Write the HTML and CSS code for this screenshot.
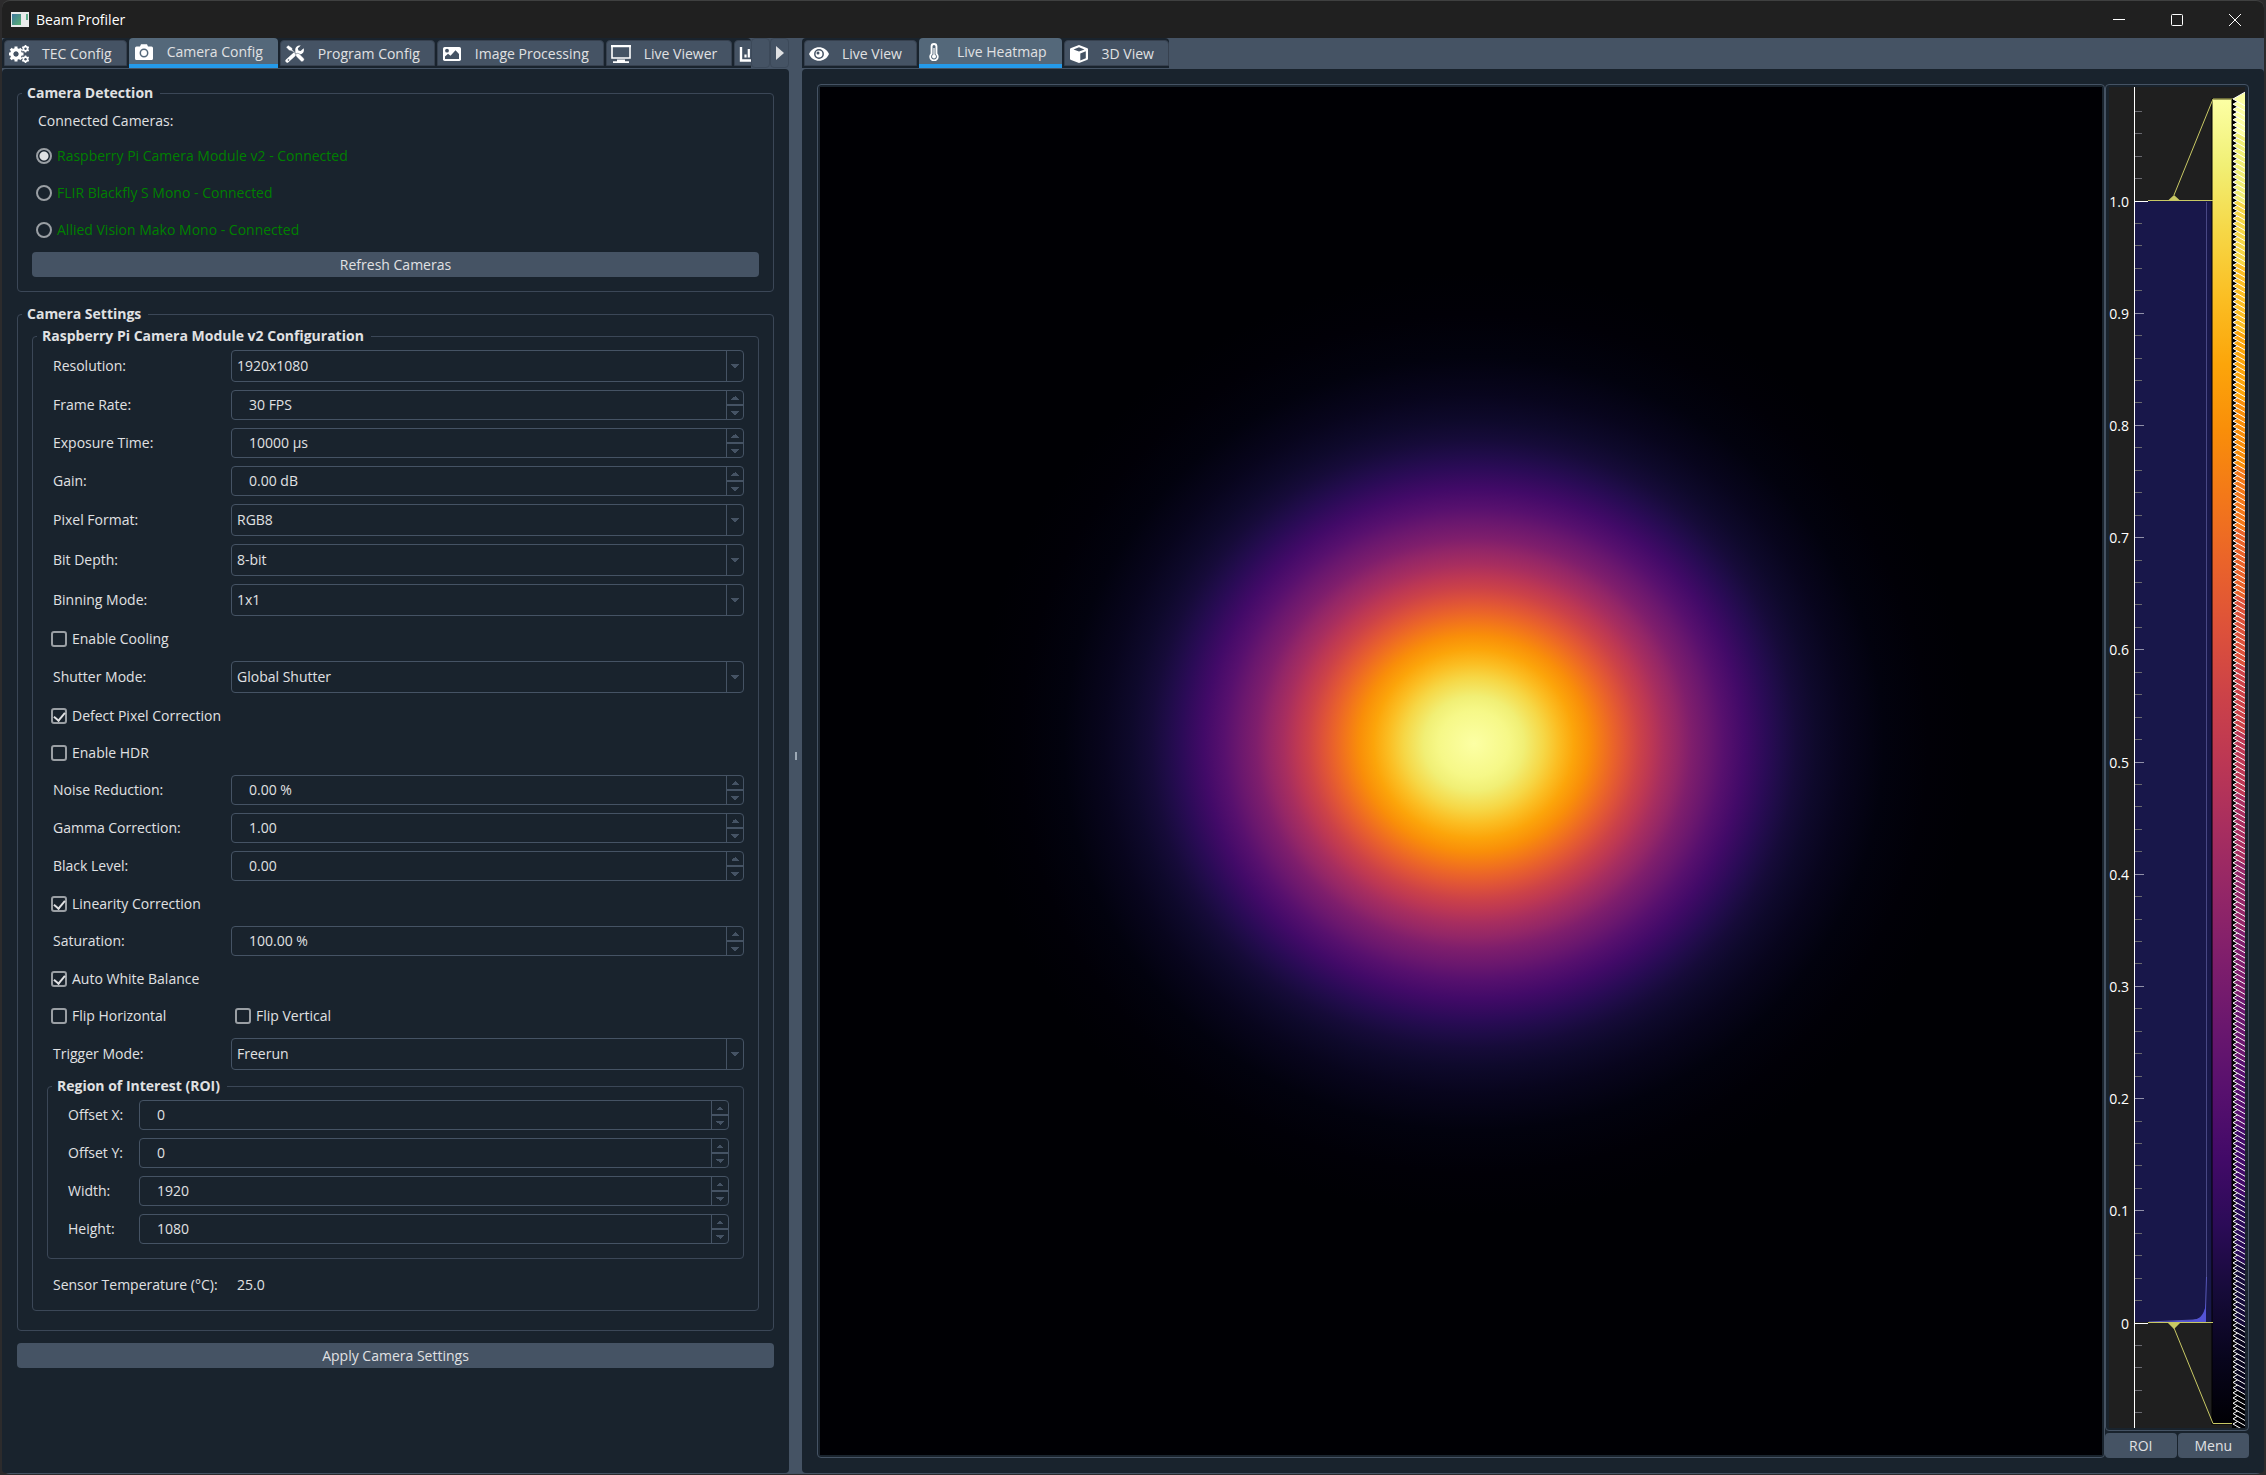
FILE: index.html
```html
<!DOCTYPE html>
<html lang="en">
<head>
    <meta charset="UTF-8">
    <meta name="viewport" content="width=device-width, initial-scale=1.0">
    <title>Beam Profiler</title>
    <link rel="stylesheet" href="styles.css">
</head>
<body>

<div class="window">
    <header class="titlebar">
        <svg class="app-icon" viewBox="0 0 18 15">
            <defs>
                <linearGradient id="appFill" x1="0" y1="0" x2="1" y2="1">
                    <stop offset="0" stop-color="#3f78a0"/>
                    <stop offset="1" stop-color="#58b070"/>
                </linearGradient>
            </defs>
            <rect width="18" height="15" fill="#e9ebec"/>
            <rect x="1" y="2" width="9" height="11" fill="url(#appFill)"/>
            <rect x="15" y="2" width="2" height="6" fill="#5fae8c"/>
        </svg>
        <span class="app-name">Beam Profiler</span>
        <div class="window-buttons">
            <button aria-label="Minimize"><svg viewBox="0 0 14 14"><path d="M1 6.500h12"/></svg></button>
            <button aria-label="Maximize"><svg viewBox="0 0 14 14"><rect x="1.500" y="1.500" width="11" height="11" rx="1"/></svg></button>
            <button aria-label="Close"><svg viewBox="0 0 14 14"><path d="M1 1l12 12M13 1L1 13"/></svg></button>
        </div>
    </header>

    <main class="split">
        <section class="pane pane-config">
            <div class="tabbar">
                <div class="tabs" role="tablist">
                    <button class="tab" role="tab">
                        <svg viewBox="0 0 20 18"><circle cx="7" cy="9" r="4.200" fill="none" stroke="#fff" stroke-width="3.400"/><path d="M7 1.500v3M7 13.500v3M-.5 9h3M11.500 9h3M1.700 3.700l2 2M10.300 12.300l2 2M12.300 3.700l-2 2M3.700 12.300l-2 2" stroke="#fff" stroke-width="3"/><circle cx="16.500" cy="3.800" r="2" fill="none" stroke="#fff" stroke-width="2"/><path d="M16.500 0v7.600M13.200 1.900l6.600 3.800M13.200 5.700l6.600-3.800" stroke="#fff" stroke-width="1.600"/><circle cx="16.500" cy="14.200" r="2" fill="none" stroke="#fff" stroke-width="2"/><path d="M16.500 10.400v7.600M13.200 12.300l6.600 3.800M13.200 16.100l6.600-3.800" stroke="#fff" stroke-width="1.600"/><circle cx="7" cy="9" r="2.400" fill="#455364"/><circle cx="16.500" cy="3.800" r="1.200" fill="#455364"/><circle cx="16.500" cy="14.200" r="1.200" fill="#455364"/></svg>
                        TEC Config
                    </button>
                    <button class="tab active" role="tab" aria-selected="true">
                        <svg viewBox="0 0 20 18"><path d="M2.500 3.500H6L7 1.200h6l1 2.300h3.500A1.500 1.500 0 0 1 19 5v10.500a1.500 1.500 0 0 1-1.500 1.500h-15A1.500 1.500 0 0 1 1 15.500V5a1.500 1.500 0 0 1 1.500-1.500z" fill="#fff"/><circle cx="10" cy="10" r="3.700" fill="none" stroke="#54687a" stroke-width="1.500"/></svg>
                        Camera Config
                    </button>
                    <button class="tab" role="tab">
                        <svg viewBox="0 0 20 18"><path d="M2.200 15.800l8.300-7.500" stroke="#fff" stroke-width="3.600" stroke-linecap="round"/><path d="M18.600 3.300l-3 2.700-2.200-.5-.6-2.200 3-2.700c-2.600-.8-5.600 1-5.600 4.200 0 3.400 3.400 5.400 6.300 4.300 2-.8 3-3.400 2.100-5.800z" fill="#fff"/><path d="M1 2.200L3.300.2l4 2.900.2 2 3.800 3.500c1.400-.5 2.500-.2 3.500.7l4.200 4.100c1.300 1.300-1.400 4.300-2.900 3l-4.400-4.300c-1-1-1.300-2.300-.8-3.400L6.500 5.900l-2.300-.3z" fill="#fff" stroke="#455364" stroke-width=".5"/><circle cx="3.500" cy="15" r=".8" fill="#455364"/></svg>
                        Program Config
                    </button>
                    <button class="tab" role="tab">
                        <svg viewBox="0 0 20 18"><rect x="1" y="2" width="18" height="14" rx="1.700" fill="#fff"/><circle cx="5" cy="5.700" r="1.900" fill="#455364"/><path d="M3 14v-2.500l3-2.700 2.500 2 5-5.500L17 9v5z" fill="#455364"/></svg>
                        Image Processing
                    </button>
                    <button class="tab" role="tab">
                        <svg viewBox="0 0 20 18"><path d="M1 1h18v12H1z" fill="none" stroke="#fff" stroke-width="1.600"/><path d="M0 1.200h20" stroke="#fff" stroke-width="2.200"/><path d="M6 15.500h8M2 17.200h16" stroke="#fff" stroke-width="1.800"/></svg>
                        Live Viewer
                    </button>
                    <button class="tab" role="tab" aria-label="Analysis">
                        <svg viewBox="0 0 20 18"><path d="M2 2v13.500h17" fill="none" stroke="#fff" stroke-width="2.400"/><path d="M6.500 9.500v3M9.800 4v8.500M13.200 7v5.500M16.500 3v9.500" stroke="#fff" stroke-width="2.200"/></svg>
                    </button>
                </div>
                <button class="scroll-tabs" aria-label="Scroll tabs left" disabled></button>
                <button class="scroll-tabs" aria-label="Scroll tabs right"><svg viewBox="0 0 8 14"><path d="M0 0l8 7-8 7z" fill="#e0e1e3"/></svg></button>
            </div>

            <form class="panel config-form">
                <fieldset class="group detection">
                    <legend>Camera Detection</legend>
                    <p class="caption">Connected Cameras:</p>
                    <label class="option camera"><input type="radio" name="camera" checked>Raspberry Pi Camera Module v2 - Connected</label>
                    <label class="option camera"><input type="radio" name="camera">FLIR Blackfly S Mono - Connected</label>
                    <label class="option camera"><input type="radio" name="camera">Allied Vision Mako Mono - Connected</label>
                    <button type="button" class="action">Refresh Cameras</button>
                </fieldset>

                <fieldset class="group settings">
                    <legend>Camera Settings</legend>
                    <fieldset class="group device">
                        <legend>Raspberry Pi Camera Module v2 Configuration</legend>
                        <div class="row">
                            <label for="resolution">Resolution:</label>
                            <span class="combo"><select id="resolution"><option>1920x1080</option></select></span>
                        </div>
                        <div class="row">
                            <label for="frameRate">Frame Rate:</label>
                            <span class="spin"><input type="text" id="frameRate" value="30 FPS"><button type="button" class="up" aria-label="Increase"></button><button type="button" class="down" aria-label="Decrease"></button></span>
                        </div>
                        <div class="row">
                            <label for="exposure">Exposure Time:</label>
                            <span class="spin"><input type="text" id="exposure" value="10000 µs"><button type="button" class="up" aria-label="Increase"></button><button type="button" class="down" aria-label="Decrease"></button></span>
                        </div>
                        <div class="row">
                            <label for="gain">Gain:</label>
                            <span class="spin"><input type="text" id="gain" value="0.00 dB"><button type="button" class="up" aria-label="Increase"></button><button type="button" class="down" aria-label="Decrease"></button></span>
                        </div>
                        <div class="row">
                            <label for="pixelFormat">Pixel Format:</label>
                            <span class="combo"><select id="pixelFormat"><option>RGB8</option></select></span>
                        </div>
                        <div class="row">
                            <label for="bitDepth">Bit Depth:</label>
                            <span class="combo"><select id="bitDepth"><option>8-bit</option></select></span>
                        </div>
                        <div class="row">
                            <label for="binning">Binning Mode:</label>
                            <span class="combo"><select id="binning"><option>1x1</option></select></span>
                        </div>
                        <div class="row">
                            <label class="option"><input type="checkbox">Enable Cooling</label>
                        </div>
                        <div class="row">
                            <label for="shutter">Shutter Mode:</label>
                            <span class="combo"><select id="shutter"><option>Global Shutter</option></select></span>
                        </div>
                        <div class="row">
                            <label class="option"><input type="checkbox" checked>Defect Pixel Correction</label>
                        </div>
                        <div class="row">
                            <label class="option"><input type="checkbox">Enable HDR</label>
                        </div>
                        <div class="row">
                            <label for="noise">Noise Reduction:</label>
                            <span class="spin"><input type="text" id="noise" value="0.00 %"><button type="button" class="up" aria-label="Increase"></button><button type="button" class="down" aria-label="Decrease"></button></span>
                        </div>
                        <div class="row">
                            <label for="gamma">Gamma Correction:</label>
                            <span class="spin"><input type="text" id="gamma" value="1.00"><button type="button" class="up" aria-label="Increase"></button><button type="button" class="down" aria-label="Decrease"></button></span>
                        </div>
                        <div class="row">
                            <label for="blackLevel">Black Level:</label>
                            <span class="spin"><input type="text" id="blackLevel" value="0.00"><button type="button" class="up" aria-label="Increase"></button><button type="button" class="down" aria-label="Decrease"></button></span>
                        </div>
                        <div class="row">
                            <label class="option"><input type="checkbox" checked>Linearity Correction</label>
                        </div>
                        <div class="row">
                            <label for="saturation">Saturation:</label>
                            <span class="spin"><input type="text" id="saturation" value="100.00 %"><button type="button" class="up" aria-label="Increase"></button><button type="button" class="down" aria-label="Decrease"></button></span>
                        </div>
                        <div class="row">
                            <label class="option"><input type="checkbox" checked>Auto White Balance</label>
                        </div>
                        <div class="row">
                            <label class="option"><input type="checkbox">Flip Horizontal</label>
                            <label class="option"><input type="checkbox">Flip Vertical</label>
                        </div>
                        <div class="row">
                            <label for="trigger">Trigger Mode:</label>
                            <span class="combo"><select id="trigger"><option>Freerun</option></select></span>
                        </div>

                        <fieldset class="group roi">
                            <legend>Region of Interest (ROI)</legend>
                            <div class="row">
                                <label for="offsetX">Offset X:</label>
                                <span class="spin"><input type="text" id="offsetX" value="0"><button type="button" class="up" aria-label="Increase"></button><button type="button" class="down" aria-label="Decrease"></button></span>
                            </div>
                            <div class="row">
                                <label for="offsetY">Offset Y:</label>
                                <span class="spin"><input type="text" id="offsetY" value="0"><button type="button" class="up" aria-label="Increase"></button><button type="button" class="down" aria-label="Decrease"></button></span>
                            </div>
                            <div class="row">
                                <label for="roiWidth">Width:</label>
                                <span class="spin"><input type="text" id="roiWidth" value="1920"><button type="button" class="up" aria-label="Increase"></button><button type="button" class="down" aria-label="Decrease"></button></span>
                            </div>
                            <div class="row">
                                <label for="roiHeight">Height:</label>
                                <span class="spin"><input type="text" id="roiHeight" value="1080"><button type="button" class="up" aria-label="Increase"></button><button type="button" class="down" aria-label="Decrease"></button></span>
                            </div>
                        </fieldset>

                        <div class="row readout">
                            <label for="sensorTemp">Sensor Temperature (°C):</label>
                            <output id="sensorTemp">25.0</output>
                        </div>
                    </fieldset>
                </fieldset>

                <button type="button" class="action">Apply Camera Settings</button>
            </form>
        </section>

        <div class="splitter"></div>

        <section class="pane pane-view">
            <div class="tabbar">
                <div class="tabs fit" role="tablist">
                    <button class="tab" role="tab">
                        <svg viewBox="0 0 20 18"><path d="M0 9C2 4.500 5.800 2.200 10 2.200S18 4.500 20 9c-2 4.500-5.800 6.800-10 6.800S2 13.500 0 9z" fill="#fff"/><circle cx="10" cy="9" r="4.200" fill="none" stroke="#455364" stroke-width="1.500"/><circle cx="9" cy="8" r="1.500" fill="#455364"/></svg>
                        Live View
                    </button>
                    <button class="tab active" role="tab" aria-selected="true">
                        <svg viewBox="0 0 20 18"><path d="M6.600 3.400a3.400 3.400 0 0 1 6.800 0v7a4.700 4.700 0 1 1-6.800 0z" fill="#fff"/><path d="M8.500 3.600a1.500 1.500 0 0 1 3 0v7.600a2.900 2.900 0 1 1-3 0z" fill="#54687a"/><circle cx="10" cy="13.600" r="2" fill="#fff"/><path d="M10 13V5" stroke="#fff" stroke-width="1.200"/></svg>
                        Live Heatmap
                    </button>
                    <button class="tab" role="tab">
                        <svg viewBox="0 0 20 18"><path d="M10 0l8.500 3.200 .5.800v10l-.5.800L10 18l-8.500-3.200L1 14V4l.5-.8z" fill="#fff"/><path d="M10 2.300l5.500 2.100L10 6.500 4.500 4.400zM11.300 8.500l5.500-2.200v7l-5.500 2.100z" fill="#455364"/></svg>
                        3D View
                    </button>
                </div>
            </div>

            <div class="panel view">
                <div class="frame">
                    <div class="heatmap"></div>
                </div>
                <aside class="levels">
                    <div class="frame">
                        <svg class="histogram" viewBox="0 0 136 1341">
                            <defs>
                                <linearGradient id="inferno" x1="0" y1="1" x2="0" y2="0"></linearGradient>
                            </defs>
                            <rect width="136" height="1341" fill="#1f1f1f"/>
                            <rect x="26" y="114" width="78" height="1121" fill="#18174a"/>
                            <path d="M97.500 115V1190" stroke="#484784"/>
                            <path d="M97.500 1190L96.500 1222Q95 1233 84 1233L40 1235" fill="none" stroke="#5757b8"/>
                            <path d="M97 1216v19H54l30-2Q95 1232 97 1216z" fill="#5353d6"/>
                            <g id="axis"></g>
                            <path d="M25.500 0V1341" stroke="#fff"/>
                            <rect x="103" y="12" width="20" height="1325" fill="url(#inferno)" stroke="#000"/>
                            <path d="M39 113.500h65M39 1235.500h65M65 108l39-96h20M65 1241l39 95.500h20" fill="none" stroke="#c8c864"/>
                            <path d="M65 108l6 5.500H59zM65 1242l6.500-6.500h-13z" fill="#c8c864"/>
                            <rect x="123" y="12" width="4" height="1329" fill="#000"/>
                            <g id="ticks"></g>
                        </svg>
                    </div>
                    <div class="level-buttons">
                        <button type="button">ROI</button>
                        <button type="button">Menu</button>
                    </div>
                </aside>
            </div>
        </section>
    </main>
</div>

<script src="histogram.js"></script>
</body>
</html>
```

FILE: styles.css
```css
* {
    box-sizing: border-box;
}
body {
    margin: 0;
    background: #2c2b2c;
    color: #e0e1e3;
    font-family: "Open Sans", "Noto Sans", sans-serif;
    font-size: 14px;
    line-height: 20px;
}
button, input, select {
    font: inherit;
    color: inherit;
}
button {
    border: none;
    cursor: pointer;
}
.window {
    display: flex;
    flex-direction: column;
    min-height: 100vh;
    padding: 0 2px 1px 2px;
}

/* Title bar */
.titlebar {
    display: flex;
    align-items: center;
    height: 38px;
    padding-left: 9px;
    background: #202020;
    border-top: 1px solid #3f4040;
    border-radius: 8px 8px 0 0;
    color: #fff;
}
.app-icon {
    width: 18px;
    height: 15px;
    margin-right: 7px;
}
.window-buttons {
    display: flex;
    margin-left: auto;
}
.window-buttons button {
    display: flex;
    align-items: center;
    justify-content: center;
    width: 58px;
    height: 36px;
    padding: 0;
    background: none;
}
.window-buttons svg {
    width: 14px;
    height: 14px;
    fill: none;
    stroke: #fff;
}

/* Splitter layout */
.split {
    display: flex;
    flex: 1;
    background: #455364;
    border-bottom: 1px solid #455364;
    border-radius: 0 0 8px 8px;
}
.pane {
    display: flex;
    flex-direction: column;
    min-width: 0;
}
.pane-config {
    flex: 787 1 0;
}
.pane-view {
    flex: 1462 1 0;
}
.splitter {
    display: flex;
    align-items: center;
    justify-content: center;
    width: 13px;
}
.splitter::after {
    content: "";
    width: 2px;
    height: 8px;
    background: #9da9b5;
}

/* Tabs */
.tabbar {
    display: flex;
    height: 30px;
}
.tabs {
    display: flex;
    flex: 1;
    gap: 2px;
    min-width: 0;
    padding-left: 2px;
    overflow: hidden;
    background: #19232d;
    border-radius: 4px 4px 0 0;
}
.tabs.fit {
    flex: none;
}
.tab {
    display: flex;
    flex: none;
    align-items: center;
    height: 26px;
    margin-top: 2px;
    padding: 1px 14px 0 4px;
    background: #455364;
    border: 1px solid #37414f;
    border-radius: 4px 4px 0 0;
}
.tab svg {
    width: 20px;
    height: 18px;
    margin-right: 13px;
}
.tab.active {
    height: 30px;
    margin-top: 0;
    padding: 1px 15px 0 5px;
    background: #54687a;
    border: none;
    border-bottom: 4px solid #259ae9;
}
.scroll-tabs {
    display: flex;
    align-items: center;
    justify-content: center;
    width: 19px;
    padding: 0;
    background: #455364;
    border: 1px solid #3c4959;
    border-radius: 4px;
}
.scroll-tabs svg {
    width: 8px;
    height: 14px;
}

/* Panels */
.panel {
    flex: 1;
    margin-top: 1px;
    background: #19232d;
    border-radius: 4px;
}
.config-form {
    padding: 14px 15px;
}
.group {
    min-width: 0;
    margin: 0;
    padding: 0 14px 14px;
    border: 1px solid #3b4757;
    border-radius: 4px;
}
.group legend {
    margin-left: -10px;
    padding: 0 7px 0 5px;
    font-weight: bold;
}
.detection {
    display: grid;
    gap: 8px;
    padding-top: 8px;
    margin-bottom: 12px;
}
.settings {
    padding: 2px 14px 19px;
    margin-bottom: 12px;
}
.device {
    display: grid;
    gap: 8px;
    padding: 4px 14px 7px;
}
.roi {
    display: grid;
    gap: 8px;
    margin-top: -2px;
    padding-top: 4px;
}
.caption {
    height: 22px;
    margin: 0;
    padding-left: 6px;
}
.action {
    width: 100%;
    height: 25px;
    padding: 0;
    background: #455364;
    border-radius: 4px;
}

/* Form rows */
.row {
    display: grid;
    grid-template-columns: 184px 1fr;
    align-items: center;
}
.row > label {
    padding-left: 6px;
}
.roi .row {
    grid-template-columns: 77px 1fr;
}
.readout {
    height: 36px;
}
.readout output {
    padding-left: 6px;
}
.option, .row > .option {
    display: flex;
    align-items: center;
    gap: 5px;
    height: 29px;
    padding-left: 4px;
}
.camera {
    color: #008000;
}
.option input {
    appearance: none;
    width: 16px;
    height: 16px;
    margin: 0;
    border: 2px solid #9a9fa4;
    border-radius: 3px;
}
.option input[type="radio"] {
    border-radius: 50%;
}
.option input[type="radio"]:checked {
    background: radial-gradient(circle, #e0e1e3 4px, #19232d 5px);
}
.option input[type="checkbox"]:checked::after {
    content: "";
    display: block;
    width: 5px;
    height: 9px;
    margin: 0 auto;
    border: solid #e0e1e3;
    border-width: 0 2px 2px 0;
    transform: rotate(40deg);
}
.combo, .spin {
    display: grid;
    grid-template-columns: 1fr 17px;
    border: 1px solid #455364;
    border-radius: 4px;
    overflow: hidden;
}
.combo {
    height: 32px;
}
.combo select {
    grid-column: 1 / 3;
    grid-row: 1;
    appearance: none;
    padding: 0 5px;
    background: none;
    border: none;
}
.combo::after {
    content: "";
    grid-column: 2;
    grid-row: 1;
    background: conic-gradient(from 315deg at 50% 100%, #455364 90deg, transparent 0) center / 8px 4px no-repeat;
    border-left: 1px solid #455364;
    pointer-events: none;
}
.spin {
    grid-template-rows: 1fr 1fr;
    height: 30px;
}
.spin input {
    grid-row: 1 / 3;
    width: 100%;
    padding: 0 17px;
    background: none;
    border: none;
}
.spin button {
    padding: 0;
    border-left: 1px solid #455364;
}
.spin .up {
    background: conic-gradient(from 135deg at 50% 0, #455364 90deg, transparent 0) center / 8px 4px no-repeat;
    border-bottom: 1px solid #455364;
}
.spin .down {
    grid-column: 2;
    background: conic-gradient(from 315deg at 50% 100%, #455364 90deg, transparent 0) center / 8px 4px no-repeat;
    border-top: 1px solid #455364;
}

/* Heatmap view */
.view {
    display: flex;
    padding: 15px;
}
.frame {
    display: flex;
    flex: 1;
    padding: 2px;
    border: 1px solid #455364;
    border-radius: 4px;
}
.heatmap {
    flex: 1;
    background: radial-gradient(39% 34.500% at 51% 48%,
        #fcffa4 0%, #f6f888 7%, #f1ef75 10%, #f6d746 14%, #fbbe23 17%,
        #fca50a 20%, #f98e09 23%, #f37819 25.500%, #ea632a 28%, #dd513a 30.500%,
        #cc4248 33%, #bc3754 35.500%, #a82e5f 38%, #932667 41%, #7f1e6c 43.500%,
        #6a176e 47%, #57106e 50%, #420a68 54%, #2b0b57 58.500%, #1f0c48 61.500%,
        #160b39 64.500%, #0e092b 68.500%, #08051d 74%, #02020e 82%, #010007 91%,
        #000004 100%);
}
.levels {
    display: flex;
    flex-direction: column;
    width: 144px;
}
.levels .frame {
    padding: 2px 3px;
}
/* the drawing takes its size from the frame, not from its own aspect ratio */
.histogram {
    flex: 1;
    min-width: 0;
    contain: size;
    background: #1f1f1f;
}
.histogram text {
    fill: #fff;
    text-anchor: end;
}
.level-buttons {
    display: grid;
    grid-template-columns: 1fr 1fr;
    gap: 1px;
    margin-top: 2px;
}
.level-buttons button {
    height: 25px;
    padding: 0;
    background: #455364;
    border-radius: 4px;
}
```

FILE: histogram.js
```javascript
const inferno = ['#000004', '#08051d', '#160b39', '#2b0b57', '#420a68', '#57106e', '#6a176e',
    '#7f1e6c', '#932667', '#a82e5f', '#bc3754', '#cc4248', '#dd513a', '#ea632a', '#f37819',
    '#f98e09', '#fca50a', '#fbbe23', '#f6d746', '#f1ef75', '#fcffa4'];

// Colour bar
document.getElementById('inferno').innerHTML = inferno
    .map((c, i) => `<stop offset="${i * 5}%" stop-color="${c}"/>`)
    .join('');

// Axis: a labelled tick every 0.1, four small ones in between
const zeroY = 1235.5;
const tenth = 112.2;
let axis = '';
for (let i = -4; i <= 54; i++) {
    const y = Math.round(zeroY - i * tenth / 5) + 0.5;
    const major = i % 5 === 0 && i >= 0 && i <= 50;
    const end = i === 0 || i === 50 ? 39 : major ? 35 : 33;
    const color = i === 0 || i === 50 ? '#fff' : major ? '#9090a8' : '#68686e';
    axis += `<path d="M26 ${y}H${end}" stroke="${color}"/>`;
    if (major) {
        axis += `<text x="20" y="${y + 5}">${i === 0 ? '0' : (i / 50).toFixed(1)}</text>`;
    }
}
document.getElementById('axis').innerHTML = axis;

// One handle per colour map entry, from 0 up to 255
let ticks = '';
for (let i = 0; i < 256; i++) {
    const y = 1337 - i * 1325 / 255;
    const color = inferno[Math.round(i / 255 * 20)];
    ticks += `<path d="M124 ${y}l14-8v16z" fill="${color}" stroke="#fff"/>`;
}
document.getElementById('ticks').innerHTML = ticks;
```
